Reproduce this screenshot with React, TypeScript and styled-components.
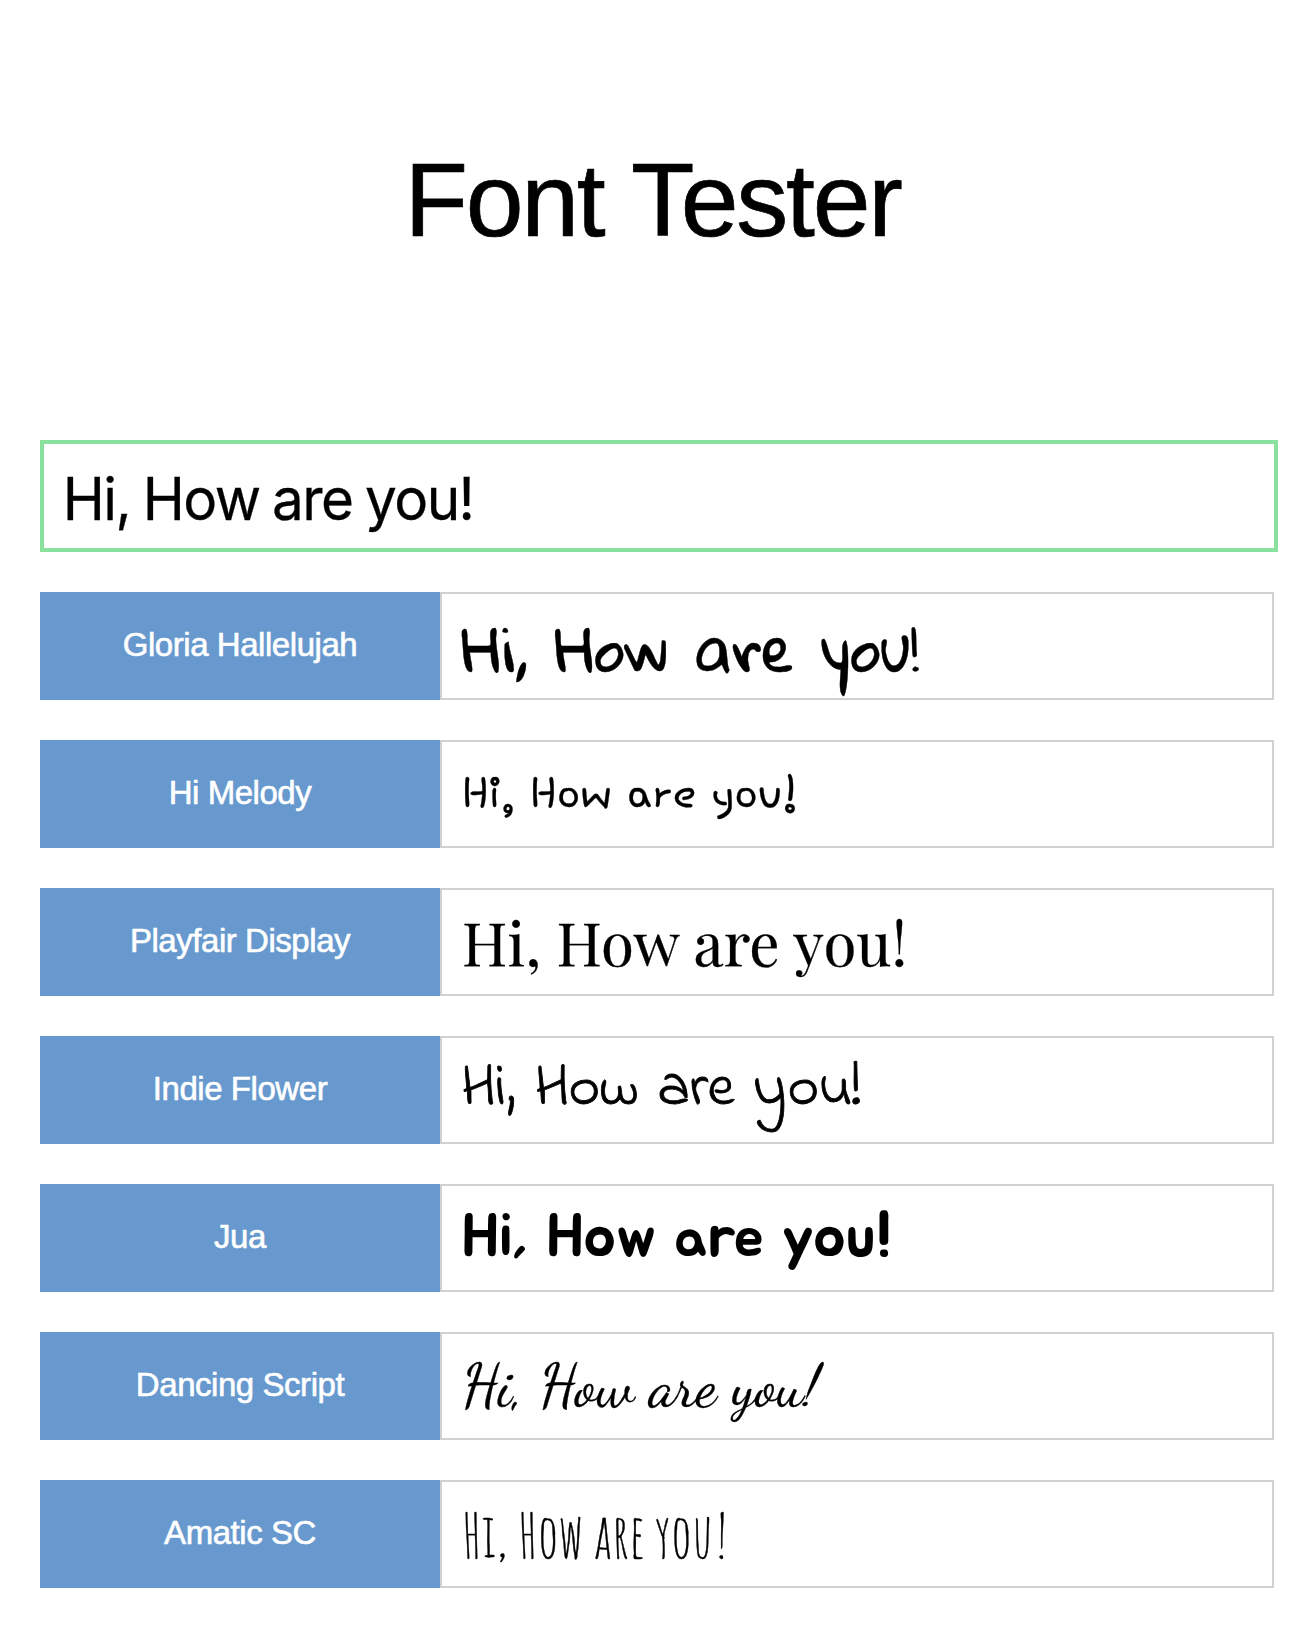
import React, { useState } from 'react';
import styled, { createGlobalStyle, css } from 'styled-components';

const GlobalStyle = createGlobalStyle`
  body {
    margin: 0;
    background: #fff;
    color: #000;
    font-family: "Liberation Sans", Helvetica, Arial, sans-serif;
  }
`;

const Page = styled.main`
  box-sizing: border-box;
  width: 1308px;
  height: 1628px;
  padding: 0 34px 0 40px;
  overflow: hidden;
`;

const Title = styled.h1`
  margin: 0 0 40px;
  padding-right: 9px;
  font-size: 104px;
  font-weight: 400;
  line-height: 400px;
  letter-spacing: -2.3px;
  word-spacing: 3px;
  -webkit-text-stroke: 0.7px #000;
  text-align: center;
`;

const Field = styled.label`
  display: block;
  box-sizing: border-box;
  width: calc(100% + 4px);
  height: 112px;
  margin-bottom: 40px;
  border: 4px solid #88e29d;
  overflow: hidden;
`;

const FieldInput = styled.input`
  display: block;
  box-sizing: border-box;
  width: 100%;
  height: 104px;
  padding: 0 0 0 19.5px;
  border: 0;
  outline: 0;
  background: transparent;
  color: #000;
  font: 400 59px Inter, sans-serif;
  letter-spacing: -1.6px;
  word-spacing: -2px;
  -webkit-text-stroke: 0.3px #000;
  transform: translateY(1.5px) scaleX(0.96);
  transform-origin: left center;
`;

const List = styled.section`
  display: grid;
  gap: 40px;
`;

const Row = styled.div`
  display: grid;
  grid-template-columns: 400px 1fr;
  height: 108px;
`;

const Name = styled.div`
  display: flex;
  align-items: center;
  justify-content: center;
  padding-bottom: 3px;
  background: #6899ce;
  color: #fff;
  font-size: 33px;
  letter-spacing: -0.45px;
  -webkit-text-stroke: 0.6px #fff;
`;

interface Face {
  name: string;
  family: string;
  tracking?: number;
  gap?: number;
  indent?: number;
  drop?: number;
  stroke?: number;
}

const Preview = styled.div<{ $face: Face }>`
  box-sizing: border-box;
  height: 108px;
  border: 2px solid #d1d1d1;
  font-size: 60px;
  white-space: nowrap;
  ${({ $face: f }) => css`
    padding-left: ${f.indent ?? 20}px;
    font-family: ${f.family};
    letter-spacing: ${f.tracking ?? 0}px;
    word-spacing: ${f.gap ?? 0}px;
    line-height: ${104 + 2 * (f.drop ?? 0)}px;
    -webkit-text-stroke: ${f.stroke ?? 0}px #000;
  `}
`;

const faces: Face[] = [
  { name: 'Gloria Hallelujah', family: '"Gloria Hallelujah", cursive', drop: 2, stroke: 0.4 },
  { name: 'Hi Melody', family: '"Hi Melody", cursive', drop: 3, tracking: 0.28, stroke: 0.3 },
  { name: 'Playfair Display', family: '"Playfair Display", serif', drop: -1, tracking: 0.2, stroke: 0.3 },
  { name: 'Indie Flower', family: '"Indie Flower", cursive', indent: 19, tracking: -0.6, gap: 5, stroke: 0.8 },
  { name: 'Jua', family: 'Jua, sans-serif', tracking: -0.25 },
  { name: 'Dancing Script', family: '"Dancing Script", cursive', stroke: 0.3 },
  { name: 'Amatic SC', family: '"Amatic SC", cursive', drop: 1, stroke: 0.4 },
];

export default function App() {
  const [text, setText] = useState('Hi, How are you!');

  return (
    <Page>
      <GlobalStyle />
      <Title>Font Tester</Title>
      <Field>
        <FieldInput value={text} spellCheck={false} onChange={(e) => setText(e.target.value)} />
      </Field>
      <List>
        {faces.map((face) => (
          <Row key={face.name}>
            <Name>{face.name}</Name>
            <Preview $face={face}>{text}</Preview>
          </Row>
        ))}
      </List>
    </Page>
  );
}
